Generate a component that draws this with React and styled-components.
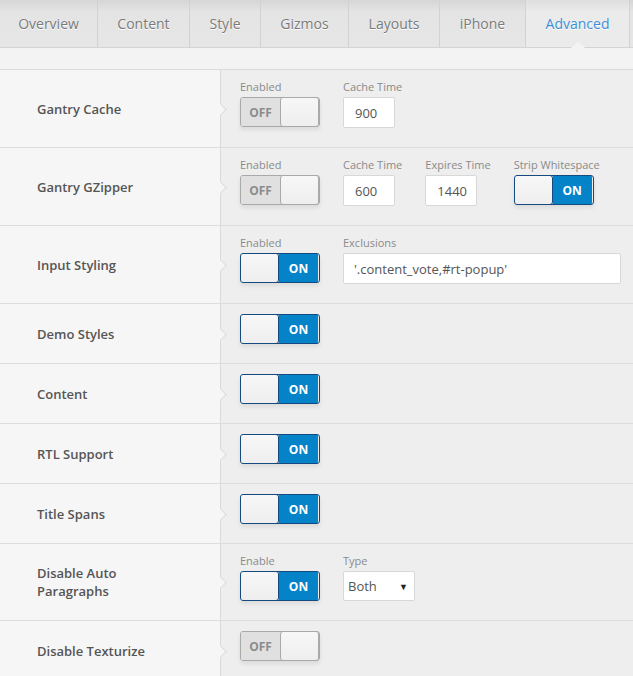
import React from 'react';
import styled, { createGlobalStyle } from 'styled-components';

const GlobalStyle = createGlobalStyle`
  body {
    margin: 0;
    background: #eeeeee;
    font-family: 'Open Sans', 'Noto Sans', sans-serif;
  }
`;

const Page = styled.div`
  width: 633px;
  overflow: hidden;
`;

const TabBar = styled.div`
  display: flex;
  height: 47px;
  border-bottom: 1px solid #d4d4d4;
  background: linear-gradient(to bottom, #d6d6d6 0, #e4e4e4 12px, #e6e6e6 100%);
`;

const Tab = styled.div`
  position: relative;
  box-sizing: border-box;
  width: ${(p) => p.$w}px;
  flex: none;
  display: flex;
  align-items: center;
  justify-content: center;
  border-right: 1px solid #d2d2d2;
  font-size: 14px;
  color: ${(p) => (p.$active ? '#3a8fd6' : '#7a7a7a')};
  background: ${(p) =>
    p.$active
      ? 'linear-gradient(to bottom, #dedede 0, #ebebeb 12px, #ebebeb 100%)'
      : 'transparent'};
  text-shadow: 0 1px 0 #fff;

  &::after {
    content: '';
    display: ${(p) => (p.$active ? 'block' : 'none')};
    position: absolute;
    left: 50%;
    bottom: -1px;
    margin-left: -7px;
    border-left: 7px solid transparent;
    border-right: 7px solid transparent;
    border-bottom: 6px solid #f3f3f3;
  }
`;

const Strip = styled.div`
  height: 21px;
  background: #f3f3f3;
  border-bottom: 1px solid #d9d9d9;
`;

const Row = styled.div`
  display: grid;
  grid-template-columns: 221px 1fr;
  border-bottom: 1px solid #dcdcdc;
`;

const LabelCell = styled.div`
  position: relative;
  box-sizing: border-box;
  display: flex;
  align-items: center;
  padding: 0 60px 0 37px;
  background: #f6f6f6;
  border-right: 1px solid #dadada;
  font-size: 13px;
  font-weight: 600;
  line-height: 18px;
  color: #555;

  &::after {
    content: '';
    position: absolute;
    right: -5px;
    top: 50%;
    width: 8px;
    height: 8px;
    margin-top: -4px;
    background: #f6f6f6;
    border-top: 1px solid #dadada;
    border-right: 1px solid #dadada;
    transform: rotate(45deg);
  }
`;

const FieldCell = styled.div`
  display: flex;
  gap: 23px;
  padding: 10px 12px 19px 19px;
  background: #eeeeee;
`;

const Field = styled.div`
  display: flex;
  flex-direction: column;
  gap: 3px;
  flex: ${(p) => (p.$grow ? '1' : 'none')};
`;

const SmallLabel = styled.div`
  font-size: 11px;
  line-height: 14px;
  color: #8a8a8a;
`;

const ToggleBox = styled.div`
  box-sizing: border-box;
  display: flex;
  width: 80px;
  height: 30px;
  border: 1px solid ${(p) => (p.$on ? '#154a80' : '#a9a9a9')};
  border-radius: 3px;
  overflow: hidden;
  box-shadow: 0 3px 4px rgba(0, 0, 0, 0.08);
`;

const ToggleSide = styled.div`
  flex: none;
  width: 39px;
  display: flex;
  align-items: center;
  justify-content: center;
  order: ${(p) => (p.$on ? 2 : 1)};
  background: ${(p) => (p.$on ? '#0583c9' : '#e0e0e0')};
  color: ${(p) => (p.$on ? '#fff' : '#8c8c8c')};
  font-size: 12px;
  font-weight: 700;
`;

const Knob = styled.div`
  box-sizing: border-box;
  flex: none;
  width: 39px;
  order: ${(p) => (p.$on ? 1 : 2)};
  background: linear-gradient(to bottom, #f7f7f7, #eeeeee);
  border-radius: 3px;
  border: 1px solid ${(p) => (p.$on ? '#154a80' : '#a9a9a9')};
  margin: -1px;
  ${(p) => (p.$on ? 'margin-right: 0;' : 'margin-left: 0;')}
`;

const TextBox = styled.div`
  box-sizing: border-box;
  width: ${(p) => (p.$w ? `${p.$w}px` : 'auto')};
  height: 31px;
  display: flex;
  align-items: center;
  padding-left: ${(p) => (p.$pad ? p.$pad : 11)}px;
  background: #fff;
  border: 1px solid #d8d8d8;
  border-radius: 2px;
  font-size: 13px;
  color: #555;
`;

const SelectBox = styled(TextBox)`
  justify-content: space-between;
  padding: 0 6px 0 4px;
  height: 30px;
`;

const Caret = styled.span`
  font-size: 9px;
  color: #222;
`;

const Toggle = ({ on }) => (
  <ToggleBox $on={on}>
    <ToggleSide $on={on}>{on ? 'ON' : 'OFF'}</ToggleSide>
    <Knob $on={on} />
  </ToggleBox>
);

const tabs = [
  ['Overview', 98],
  ['Content', 92],
  ['Style', 71],
  ['Gizmos', 88],
  ['Layouts', 91],
  ['iPhone', 86],
  ['Advanced', 104, true],
];

const App = () => {
  return (
    <Page>
      <GlobalStyle />
      <TabBar>
        {tabs.map(([name, w, active]) => (
          <Tab key={name} $w={w} $active={active}>
            {name}
          </Tab>
        ))}
      </TabBar>
      <Strip />

      <Row>
        <LabelCell>Gantry Cache</LabelCell>
        <FieldCell>
          <Field>
            <SmallLabel>Enabled</SmallLabel>
            <Toggle on={false} />
          </Field>
          <Field>
            <SmallLabel>Cache Time</SmallLabel>
            <TextBox $w={52}>900</TextBox>
          </Field>
        </FieldCell>
      </Row>

      <Row>
        <LabelCell>Gantry GZipper</LabelCell>
        <FieldCell>
          <Field>
            <SmallLabel>Enabled</SmallLabel>
            <Toggle on={false} />
          </Field>
          <Field>
            <SmallLabel>Cache Time</SmallLabel>
            <TextBox $w={52}>600</TextBox>
          </Field>
          <Field>
            <SmallLabel>Expires Time</SmallLabel>
            <TextBox $w={52}>1440</TextBox>
          </Field>
          <Field>
            <SmallLabel>Strip Whitespace</SmallLabel>
            <Toggle on />
          </Field>
        </FieldCell>
      </Row>

      <Row>
        <LabelCell>Input Styling</LabelCell>
        <FieldCell>
          <Field>
            <SmallLabel>Enabled</SmallLabel>
            <Toggle on />
          </Field>
          <Field $grow>
            <SmallLabel>Exclusions</SmallLabel>
            <TextBox $pad={10}>'.content_vote,#rt-popup'</TextBox>
          </Field>
        </FieldCell>
      </Row>

      {['Demo Styles', 'Content', 'RTL Support', 'Title Spans'].map((name) => (
        <Row key={name}>
          <LabelCell>{name}</LabelCell>
          <FieldCell>
            <Toggle on />
          </FieldCell>
        </Row>
      ))}

      <Row>
        <LabelCell>Disable Auto Paragraphs</LabelCell>
        <FieldCell>
          <Field>
            <SmallLabel>Enable</SmallLabel>
            <Toggle on />
          </Field>
          <Field>
            <SmallLabel>Type</SmallLabel>
            <SelectBox $w={72}>
              Both
              <Caret>▼</Caret>
            </SelectBox>
          </Field>
        </FieldCell>
      </Row>

      <Row>
        <LabelCell>Disable Texturize</LabelCell>
        <FieldCell>
          <Toggle on={false} />
        </FieldCell>
      </Row>
    </Page>
  );
};

export default App;
